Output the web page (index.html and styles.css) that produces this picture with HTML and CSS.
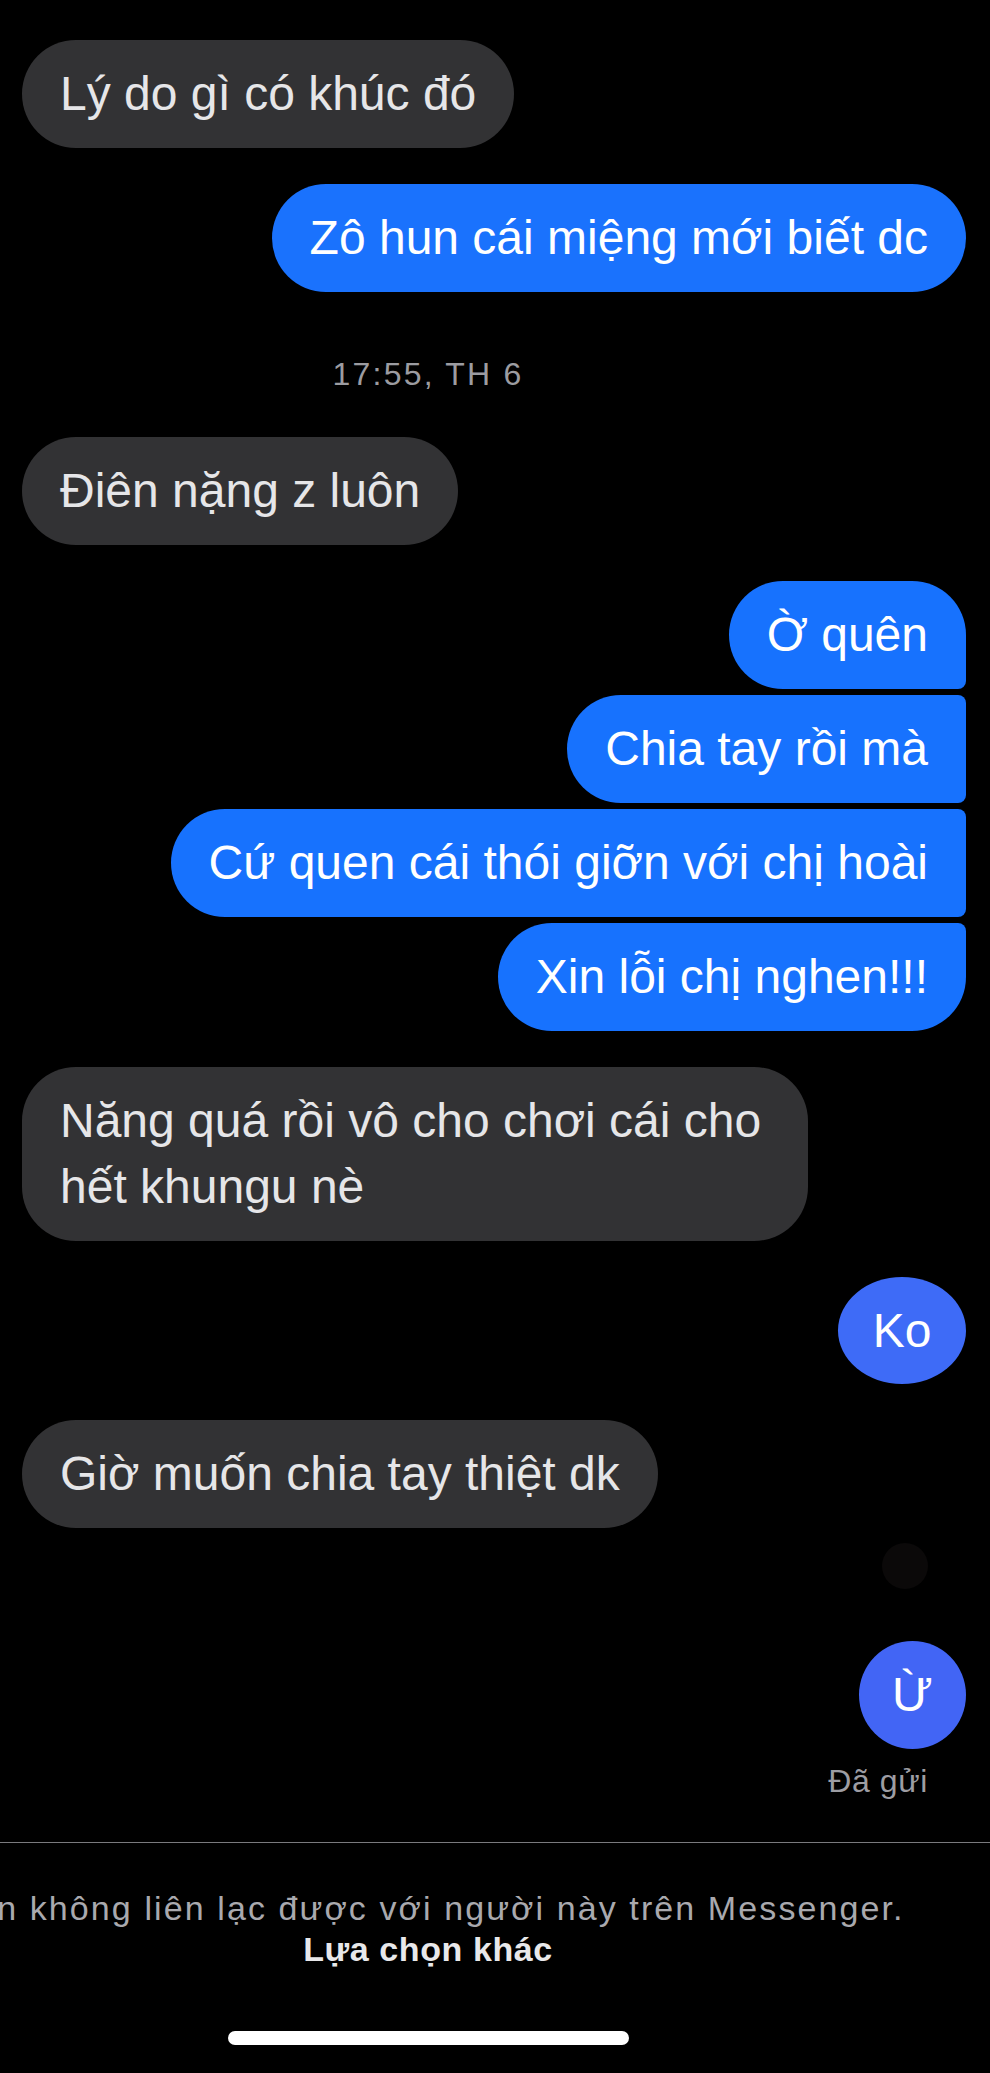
FILE: index.html
```html
<!DOCTYPE html>
<html lang="vi">
<head>
<meta charset="utf-8">
<title>Messenger</title>
<link rel="stylesheet" href="styles.css">
</head>
<body>
<main class="screen">
  <section class="thread">
    <div class="row in"><div class="bubble gray">Lý do gì có khúc đó</div></div>
    <div class="row out gap-big"><div class="bubble blue b1">Zô hun cái miệng mới biết dc</div></div>

    <div class="center stamp"><span>17:55, TH 6</span></div>

    <div class="row in"><div class="bubble gray">Điên nặng z luôn</div></div>

    <div class="group gap-big">
      <div class="row out"><div class="bubble blue b2 first">Ờ quên</div></div>
      <div class="row out"><div class="bubble blue b2 mid">Chia tay rồi mà</div></div>
      <div class="row out"><div class="bubble blue b2 mid">Cứ quen cái thói giỡn với chị hoài</div></div>
      <div class="row out"><div class="bubble blue b2 last">Xin lỗi chị nghen!!!</div></div>
    </div>

    <div class="row in gap-big"><div class="bubble gray wide">Năng quá rồi vô cho chơi cái cho hết khungu nè</div></div>
    <div class="row out gap-big"><div class="bubble blue b3 round">Ko</div></div>
    <div class="row in gap-big"><div class="bubble gray">Giờ muốn chia tay thiệt dk</div></div>

    <div class="row out seen"><div class="avatar"></div></div>
    <div class="row out"><div class="bubble blue b4 circle">Ừ</div></div>
    <div class="row out status"><span>Đã gửi</span></div>
  </section>

  <footer class="footer">
    <div class="center notice"><span>Bạn không liên lạc được với người này trên Messenger.</span></div>
    <div class="center option"><span>Lựa chọn khác</span></div>
    <div class="center home"><div class="indicator"></div></div>
  </footer>
</main>
</body>
</html>
```

FILE: styles.css
```css
* { box-sizing: border-box; }

html, body {
  margin: 0;
  padding: 0;
  background: #000;
}

body {
  width: 990px;
  height: 2073px;
  overflow: hidden;
  font-family: "Liberation Sans", Arial, sans-serif;
  color: #fff;
}

.screen {
  width: 990px;
}

.thread {
  padding: 40px 24px 0 22px;
}

.row {
  display: flex;
}

.row.in { justify-content: flex-start; }
.row.out { justify-content: flex-end; }

.gap-big { margin-top: 36px; }

.bubble {
  font-size: 48px;
  line-height: 66px;
  padding: 21px 38px;
  border-radius: 54px;
  max-width: 812px;
}

.bubble.wide { max-width: 786px; }

.gray {
  background: #323234;
  color: #e6e6e8;
}

.blue { color: #fff; }
.b1 { background: #1a72fd; }
.b2 { background: #1772fe; }
.b3 { background: #3e6bf7; }
.b4 { background: #4265f5; }

.group .row + .row { margin-top: 6px; }

.first { border-radius: 54px 54px 8px 54px; }
.mid { border-radius: 54px 8px 8px 54px; }
.last { border-radius: 54px 8px 54px 54px; }

.round {
  width: 128px;
  height: 107px;
  padding: 21px 0;
  text-align: center;
  border-radius: 50%;
}

.circle {
  width: 107px;
  height: 108px;
  padding: 21px 0;
  text-align: center;
  border-radius: 50%;
}

.center {
  width: 856px;
  display: flex;
  justify-content: center;
}

.center span { white-space: nowrap; }

.stamp {
  margin-left: -22px;
  margin-top: 64px;
  margin-bottom: 45px;
  font-size: 32px;
  line-height: 36px;
  letter-spacing: 2.2px;
  color: #9c9ca1;
}

.seen {
  margin-top: 15px;
  padding-right: 38px;
}

.avatar {
  width: 46px;
  height: 46px;
  border-radius: 50%;
  background: #0b0909;
}

.seen + .row { margin-top: 52px; }

.status {
  margin-top: 14px;
  padding-right: 38px;
  font-size: 32px;
  line-height: 36px;
  letter-spacing: 0.6px;
  color: #9d9da3;
}

.footer {
  margin-top: 43px;
  border-top: 1px solid #7a7a7e;
  padding-top: 45px;
}

.notice {
  font-size: 34px;
  line-height: 41px;
  letter-spacing: 2.1px;
  color: #a9a9ae;
}

.option {
  font-size: 34px;
  line-height: 41px;
  font-weight: 700;
  letter-spacing: 0.6px;
  color: #e8e8ea;
}

.home {
  margin-top: 61px;
}

.indicator {
  width: 401px;
  height: 14px;
  border-radius: 7px;
  background: #fff;
}
```
